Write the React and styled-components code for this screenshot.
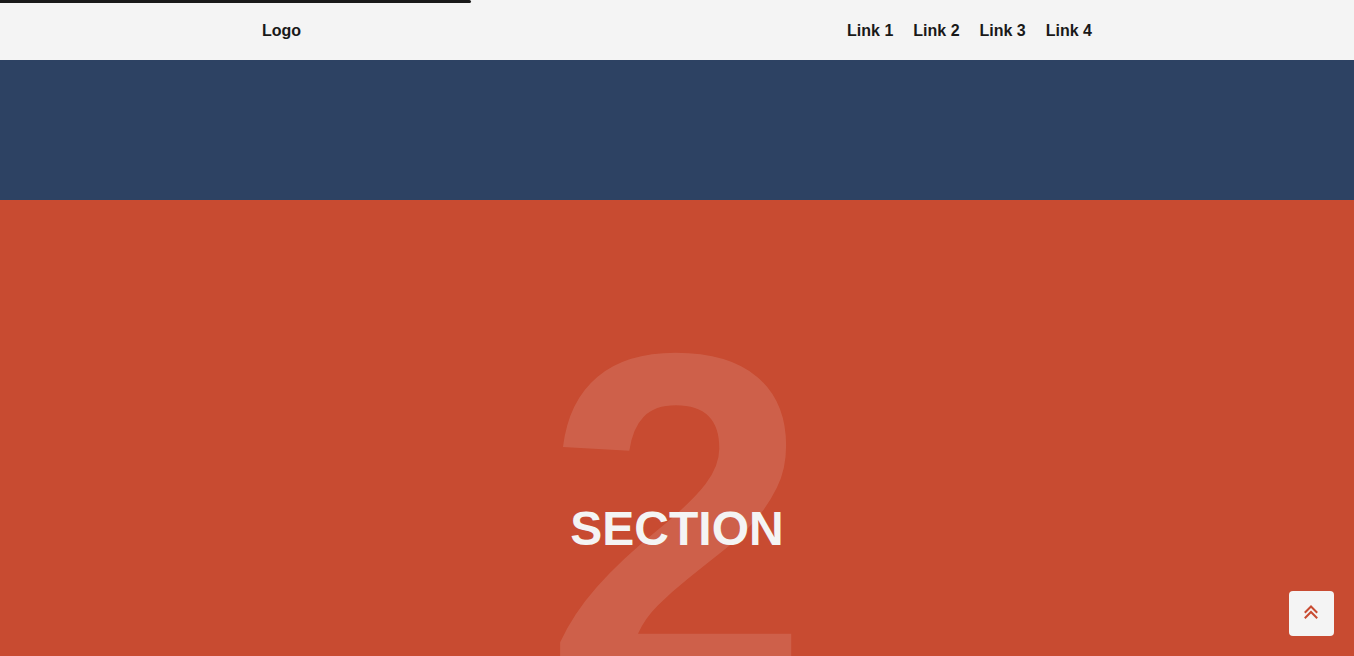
import * as React from 'react';
import styled, { createGlobalStyle } from "styled-components";

const GlobalStyle = createGlobalStyle`
    html, body {
        margin: 0;
        padding: 0;
        overflow: hidden;
        font-family: "Liberation Sans", Arial, sans-serif;
        background: #c84b31;
    }
`;

const Page = styled.div`
    display: flex;
    flex-direction: column;
    height: 100vh;
    overflow: hidden;
`;

const Header = styled.header`
    position: relative;
    flex: 0 0 60px;
    background: #f4f4f4;
    display: flex;
    align-items: center;
`;

const Progress = styled.div`
    position: absolute;
    top: 0;
    left: 0;
    height: 3px;
    background: #191919;
    border-radius: 0 2px 2px 0;
`;

const Nav = styled.nav`
    width: 830px;
    margin: 0 auto;
    padding-top: 2px;
    display: flex;
    justify-content: space-between;
    align-items: center;
`;

const Logo = styled.div`
    font-size: 16px;
    font-weight: bold;
    color: #191919;
`;

const Links = styled.ul`
    display: flex;
    gap: 20px;
    list-style: none;
    margin: 0;
    padding: 0;
`;

const NavLink = styled.li`
    font-size: 16px;
    font-weight: bold;
    color: #191919;
    cursor: pointer;
`;

const Band = styled.section`
    flex: 0 0 140px;
    background: #2d4263;
`;

const Section = styled.section`
    position: relative;
    flex: 0 0 100vh;
    background: ${(p) => p.color};
    display: flex;
    align-items: center;
    justify-content: center;
    overflow: hidden;
`;

const BigNumber = styled.div`
    position: absolute;
    inset: 0;
    padding-bottom: 12px;
    display: flex;
    align-items: center;
    justify-content: center;
    font-size: 480px;
    font-weight: bold;
    line-height: 1;
    color: rgba(255, 255, 255, 0.12);
    user-select: none;
`;

const Title = styled.h2`
    position: relative;
    margin: 0;
    font-size: 48px;
    font-weight: bold;
    color: #f4f4f4;
`;

const TopButton = styled.button`
    position: fixed;
    right: 20px;
    bottom: 20px;
    width: 45px;
    height: 45px;
    border: none;
    border-radius: 4px;
    background: #f4f4f4;
    color: #c84b31;
    display: flex;
    align-items: center;
    justify-content: center;
    padding: 0 2px 4px 0;
    cursor: pointer;
`;

const ChevronsUp = () => (
    <svg width="14" height="15" viewBox="0 0 14 15" fill="none" stroke="currentColor" strokeWidth="2" strokeLinecap="square">
        <polyline points="1.5,8 7,2.5 12.5,8" />
        <polyline points="1.5,13.5 7,8 12.5,13.5" />
    </svg>
);

const App = () => {
    const progress = 34.8;

    return (
        <>
            <GlobalStyle />
            <Page>
                <Header>
                    <Progress style={{ width: `${progress}%` }} />
                    <Nav>
                        <Logo>Logo</Logo>
                        <Links>
                            <NavLink>Link 1</NavLink>
                            <NavLink>Link 2</NavLink>
                            <NavLink>Link 3</NavLink>
                            <NavLink>Link 4</NavLink>
                        </Links>
                    </Nav>
                </Header>
                <Band />
                <Section color="#c84b31">
                    <BigNumber>2</BigNumber>
                    <Title>SECTION</Title>
                </Section>
            </Page>
            <TopButton aria-label="Back to top">
                <ChevronsUp />
            </TopButton>
        </>
    )
}

export default App;
